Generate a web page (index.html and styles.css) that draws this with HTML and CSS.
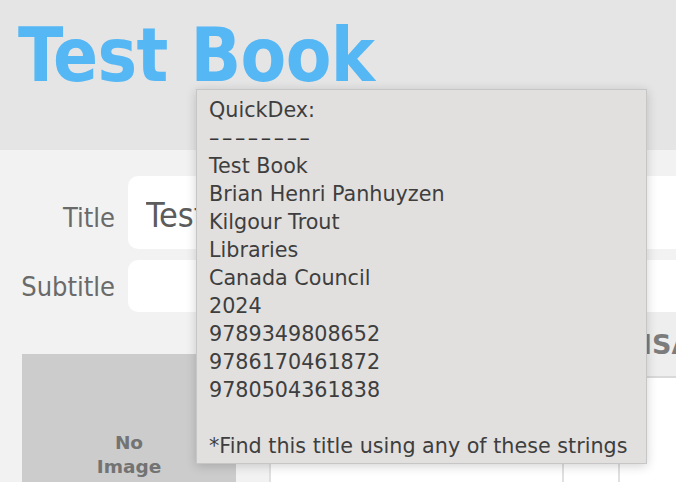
FILE: index.html
```html
<!DOCTYPE html>
<html lang="en">
<head>
  <meta charset="UTF-8" />
  <meta name="viewport" content="width=device-width, initial-scale=1.0" />
  <title>Test Book</title>
  <link rel="stylesheet" href="styles.css">
</head>
<body>
  <header class="top">
    <h1 class="book-title">Test Book</h1>
  </header>

  <main class="form">
    <div class="field">
      <label class="label" for="title">Title</label>
      <input class="input input-big" id="title" type="text" value="Test Book" />
    </div>
    <div class="field field-small">
      <label class="label" for="subtitle">Subtitle</label>
      <input class="input" id="subtitle" type="text" />
    </div>

    <div class="lower">
      <div class="cover">No<br>Image</div>

      <div class="isbns">
        <div class="isbn-head">
          <div class="cell"></div>
          <div class="cell"></div>
          <div class="cell">ISAN</div>
        </div>
        <div class="isbn-row">
          <div class="cell"></div>
          <div class="cell"></div>
          <div class="cell"></div>
        </div>
        <div class="isbn-row isbn-row-edit">
          <div class="cell"></div>
          <div class="cell"></div>
          <div class="cell"></div>
        </div>
      </div>
    </div>
  </main>

  <!-- hover tip on the title field -->
  <div class="tip">QuickDex:<br><span class="tip-rule">––––––––</span><br>Test Book<br>Brian Henri Panhuyzen<br>Kilgour Trout<br>Libraries<br>Canada Council<br>2024<br>9789349808652<br>9786170461872<br>9780504361838<br><br>*Find this title using any of these strings</div>
</body>
</html>
```

FILE: styles.css
```css
*{box-sizing:border-box}
body{margin:0;background:#f2f2f2;overflow:hidden;font-family:"DejaVu Sans",sans-serif;position:relative;min-height:100vh}
.top{height:150px;background:#e5e5e5;padding:18px 0 0 18px}
.book-title{margin:0;font-family:"DejaVu Sans Condensed","DejaVu Sans",sans-serif;font-stretch:condensed;font-weight:bold;font-size:74px;line-height:74px;color:#56b7f5;letter-spacing:-.6px}

.form{width:720px;padding-top:26px}
.field{display:flex;align-items:baseline;gap:13px;margin-bottom:11px}
.field-small{align-items:center}
.label{width:115px;flex:none;text-align:right;font-family:"DejaVu Sans Condensed","DejaVu Sans",sans-serif;font-stretch:condensed;font-size:27px;color:#6a6a6a}
.input{flex:1;height:52px;border:none;border-radius:10px;background:#fff;padding:0 18px;font-family:"DejaVu Sans Condensed","DejaVu Sans",sans-serif;font-stretch:condensed;font-size:24px;color:#5c5c5c;outline:none}
.input-big{height:73px;padding-top:5px;font-size:34px}

.lower{display:flex;gap:33px;padding-left:22px;margin-top:-11px}
.cover{flex:none;width:214px;height:202px;margin-top:42px;background:#ccc;display:flex;align-items:center;justify-content:center;text-align:center;font-weight:bold;font-size:18.5px;line-height:24px;color:#737373}

.isbns{flex:none;width:480px}
.isbn-head,.isbn-row{display:grid;grid-template-columns:293px 56px 1fr}
.isbn-head{height:66px;background:#eee;border-bottom:2px solid #d9d9d9;align-items:center;font-weight:bold;font-size:27px;color:#7c7c7c}
.isbn-head .cell{padding-left:24px}
.isbn-row{height:52px;background:#fff}
.isbn-row-edit{height:80px;background:#f6f6f6}
.isbn-row-edit .cell{border-left:2px solid #e0e0e0;background:#fff}

.tip{position:absolute;left:196px;top:89px;width:451px;height:375px;padding:6px 12px 2px;background:#e1e0df;border:1px solid #c6c6c6;box-shadow:0 2px 10px rgba(0,0,0,.18);font-size:20.7px;line-height:28px;color:#3e3e3e;white-space:nowrap}
.tip-rule{letter-spacing:2.6px;color:#333}
```
